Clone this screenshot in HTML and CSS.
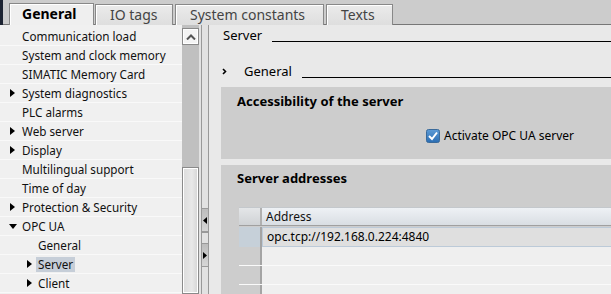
FILE: index.html
```html
<!DOCTYPE html>
<html>
<head>
<meta charset="utf-8">
<link rel="stylesheet" href="styles.css">
</head>
<body>
<div class="app">
  <div class="tabbar">
    <div class="edge"></div>
    <div class="tab active">General</div>
    <div class="tab">IO tags</div>
    <div class="tab wide">System constants</div>
    <div class="tab">Texts</div>
  </div>
  <div class="main">
    <ul class="nav">
      <li class="item"><span class="tri"></span><span class="lbl">Communication load</span></li>
      <li class="item"><span class="tri"></span><span class="lbl">System and clock memory</span></li>
      <li class="item"><span class="tri"></span><span class="lbl">SIMATIC Memory Card</span></li>
      <li class="item"><span class="tri"><svg width="5" height="8" viewBox="0 0 5 8"><path d="M0 0L5 4L0 8Z" fill="#000"/></svg></span><span class="lbl">System diagnostics</span></li>
      <li class="item"><span class="tri"></span><span class="lbl">PLC alarms</span></li>
      <li class="item"><span class="tri"><svg width="5" height="8" viewBox="0 0 5 8"><path d="M0 0L5 4L0 8Z" fill="#000"/></svg></span><span class="lbl">Web server</span></li>
      <li class="item"><span class="tri"><svg width="5" height="8" viewBox="0 0 5 8"><path d="M0 0L5 4L0 8Z" fill="#000"/></svg></span><span class="lbl">Display</span></li>
      <li class="item"><span class="tri"></span><span class="lbl">Multilingual support</span></li>
      <li class="item"><span class="tri"></span><span class="lbl">Time of day</span></li>
      <li class="item"><span class="tri"><svg width="5" height="8" viewBox="0 0 5 8"><path d="M0 0L5 4L0 8Z" fill="#000"/></svg></span><span class="lbl">Protection &amp; Security</span></li>
      <li class="item"><span class="tri"><svg width="8" height="5" viewBox="0 0 8 5"><path d="M0 0L8 0L4 5Z" fill="#000"/></svg></span><span class="lbl">OPC UA</span></li>
      <li class="item sub"><span class="tri"></span><span class="lbl">General</span></li>
      <li class="item sub"><span class="tri"><svg width="5" height="8" viewBox="0 0 5 8"><path d="M0 0L5 4L0 8Z" fill="#000"/></svg></span><span class="lbl sel">Server</span></li>
      <li class="item sub"><span class="tri"><svg width="5" height="8" viewBox="0 0 5 8"><path d="M0 0L5 4L0 8Z" fill="#000"/></svg></span><span class="lbl">Client</span></li>
    </ul>
    <div class="scroll">
      <div class="sbtn"><svg width="10" height="6" viewBox="0 0 10 6"><path d="M1 5.5L5 1.5L9 5.5" fill="none" stroke="#555" stroke-width="2"/></svg></div>
      <div class="track"></div>
      <div class="thumb"></div>
    </div>
    <div class="gapcol"></div>
    <div class="splitter">
      <div class="spacer1"></div>
      <div class="sbut"><svg width="4" height="7" viewBox="0 0 4 7"><path d="M4 0L0 3.5L4 7Z" fill="#000"/></svg></div>
      <div class="spacer2"></div>
      <div class="sbut"><svg width="4" height="7" viewBox="0 0 4 7"><path d="M0 0L4 3.5L0 7Z" fill="#000"/></svg></div>
    </div>
    <div class="content">
      <div class="head">
        <span class="htext">Server</span>
        <span class="hline"></span>
      </div>
      <div class="sub-head">
        <span class="chev"><svg width="5" height="7" viewBox="0 0 5 7"><path d="M1 1L3.5 3.5L1 6" fill="none" stroke="#000" stroke-width="1.6"/></svg></span>
        <span class="htext">General</span>
        <span class="hline"></span>
      </div>
      <section class="panel p1">
        <h2 class="ptitle">Accessibility of the server</h2>
        <div class="check-row">
          <svg class="cbox" width="14" height="14" viewBox="0 0 14 14">
            <defs><linearGradient id="cb" x1="0" y1="0" x2="0" y2="1"><stop offset="0" stop-color="#5d9bd6"/><stop offset="1" stop-color="#2a6db3"/></linearGradient></defs>
            <rect x="0.5" y="0.5" width="13" height="13" rx="2" fill="url(#cb)" stroke="#3a6a9a"/>
            <path d="M3 7L6 10L11 3.5" fill="none" stroke="#fff" stroke-width="2"/>
          </svg>
          <span class="clabel">Activate OPC UA server</span>
        </div>
      </section>
      <section class="panel p2">
        <h2 class="ptitle">Server addresses</h2>
        <div class="table">
          <div class="trow thead"><div class="rh"></div><div class="cell">Address</div></div>
          <div class="trow tdata"><div class="rh"></div><div class="cell">opc.tcp://192.168.0.224:4840</div></div>
          <div class="trow tempty"><div class="rh"></div><div class="cell"></div></div>
          <div class="trow tempty"><div class="rh"></div><div class="cell"></div></div>
          <div class="trow tempty"><div class="rh"></div><div class="cell"></div></div>
        </div>
      </section>
    </div>
  </div>
</div>
</body>
</html>
```

FILE: styles.css
```css
* { box-sizing: border-box; }
html, body { margin: 0; padding: 0; }
body {
  width: 611px;
  height: 294px;
  overflow: hidden;
  font-family: "Noto Sans", "Open Sans", sans-serif;
  color: #000;
  background: #e9e9e9;
}
.app { width: 611px; height: 294px; display: flex; flex-direction: column; }

.tabbar {
  height: 25px;
  flex-shrink: 0;
  background: #cccccc;
  display: flex;
  align-items: flex-end;
  border-bottom: 1px solid #777;
}
.edge { width: 3px; height: 25px; align-self: flex-start; background: #1d2432; margin-right: 6px; }
.tab {
  height: 21px;
  margin-bottom: -1px;
  padding: 0 14px;
  border: 1px solid #888;
  border-bottom: none;
  box-shadow: inset 1px 1px 0 #fff;
  background: linear-gradient(#ebebeb, #dedede);
  font-size: 14px;
  line-height: 20px;
  color: #444;
  margin-right: 2px;
}
.tab.active {
  height: 22px;
  background: #efefef;
  color: #000;
  font-weight: bold;
  width: 85px;
  padding: 0 0 0 12px;
  margin-right: 1px;
}
.tab:nth-child(3) { width: 78px; }
.tab.wide { width: 149px; }
.tab:nth-child(5) { width: 67px; }

.main { flex: 1; display: flex; min-height: 0; }

.nav {
  list-style: none;
  margin: 0;
  padding: 2px 0 0 0;
  width: 182px;
  flex-shrink: 0;
  background: #f0f0f0;
}
.item {
  height: 19px;
  border-bottom: 1px solid #f9f9f9;
  display: flex;
  align-items: center;
  font-size: 11.7px;
  color: #111;
}
.tri { width: 20px; padding-left: 10px; display: flex; align-items: center; }
.item:nth-child(11) .tri { padding-left: 9px; }
.item.sub .tri { width: 36px; padding-left: 27px; }
.lbl { padding: 0 2px; line-height: 15px; }
.lbl.sel { background: #c6ced8; }

.scroll {
  width: 17px;
  flex-shrink: 0;
  display: flex;
  flex-direction: column;
  background: #c0c0c0;
  padding-top: 3px;
}
.sbtn {
  height: 17px;
  flex-shrink: 0;
  border: 1px solid #8a8a8a;
  background: #f4f4f4;
  box-shadow: inset 0 0 0 1px #fff;
  display: flex; align-items: center; justify-content: center;
}
.track { height: 122px; flex-shrink: 0; }
.thumb {
  flex: 1;
  border: 1px solid #8a8a8a;
  box-shadow: inset 0 0 0 1px #fff;
  background: linear-gradient(90deg, #dcdcdc, #e8e8e8 60%, #d4d4d4);
}
.gapcol { width: 2px; flex-shrink: 0; background: #e2e2e2; }
.splitter {
  width: 8px;
  flex-shrink: 0;
  border-left: 1px solid #999;
  border-right: 1px solid #999;
  background: #e2e2e2;
  display: flex; flex-direction: column;
}
.spacer1 { height: 183px; flex-shrink: 0; }
.spacer2 { height: 11px; flex-shrink: 0; border-top: 1px solid #999; }
.sbut {
  height: 24px;
  flex-shrink: 0;
  background: linear-gradient(#bdbdbd, #d6d6d6);
  border-top: 1px solid #9a9a9a;
  border-bottom: 1px solid #9a9a9a;
  display: flex; align-items: center; justify-content: center;
}

.content {
  flex: 1;
  background: #e9e9e9;
  padding-left: 12px;
  display: flex;
  flex-direction: column;
  min-width: 0;
  overflow: hidden;
}
.content > * { flex-shrink: 0; }
.head, .sub-head {
  display: flex;
  align-items: flex-start;
  height: 16px;
  font-size: 13px;
}
.head { margin-top: 2px; padding-left: 2px; }
.htext { line-height: 16px; margin-right: 10px; }
.hline { flex: 1; height: 1px; background: #000; margin-top: 14px; }
.sub-head { margin-top: 20px; }
.chev { width: 23px; padding-left: 1px; height: 16px; display: flex; align-items: center; }
.sub-head .htext { margin-right: 10px; }

.panel { background: #cdcdcd; }
.ptitle {
  margin: 0;
  font-size: 13px;
  font-weight: bold;
  line-height: 16px;
  padding-left: 16px;
}
.p1 { margin-top: 8px; height: 72px; padding-top: 6px; }
.check-row { display: flex; align-items: center; margin-top: 20px; padding-left: 205px; }
.cbox { display: block; margin-right: 4px; }
.clabel { font-size: 12px; line-height: 14px; }
.p2 { margin-top: 6px; flex: 1 0 auto; padding-top: 5px; }

.table { margin-top: 21px; margin-left: 18px; }
.trow { display: flex; }
.rh { width: 23px; border-right: 2px solid #a4a4a4; }
.cell { flex: 1; font-size: 12px; padding-left: 4px; }
.thead { height: 19px; border-top: 1px solid #c4c8cc; border-bottom: 1px solid #a0a0a0; }
.thead .rh { background: linear-gradient(#e4e6e8, #cfd2d5); border-right-color: #b0b0b0; }
.thead .cell { background: linear-gradient(#eef1f5, #d9dee3); line-height: 17px; color: #111; }
.tdata { height: 20px; margin-top: 1px; }
.tdata .rh { background: #c6d0d9; }
.tdata .cell { background: #dfdfdf; border-top: 1px solid #bccad8; border-bottom: 1px solid #bccad8; border-left: 1px solid #bccad8; line-height: 17px; padding-left: 4px; }
.tempty { height: 19px; border-bottom: 1px solid #fafafa; }
.tempty .cell { background: #efefef; }
```
